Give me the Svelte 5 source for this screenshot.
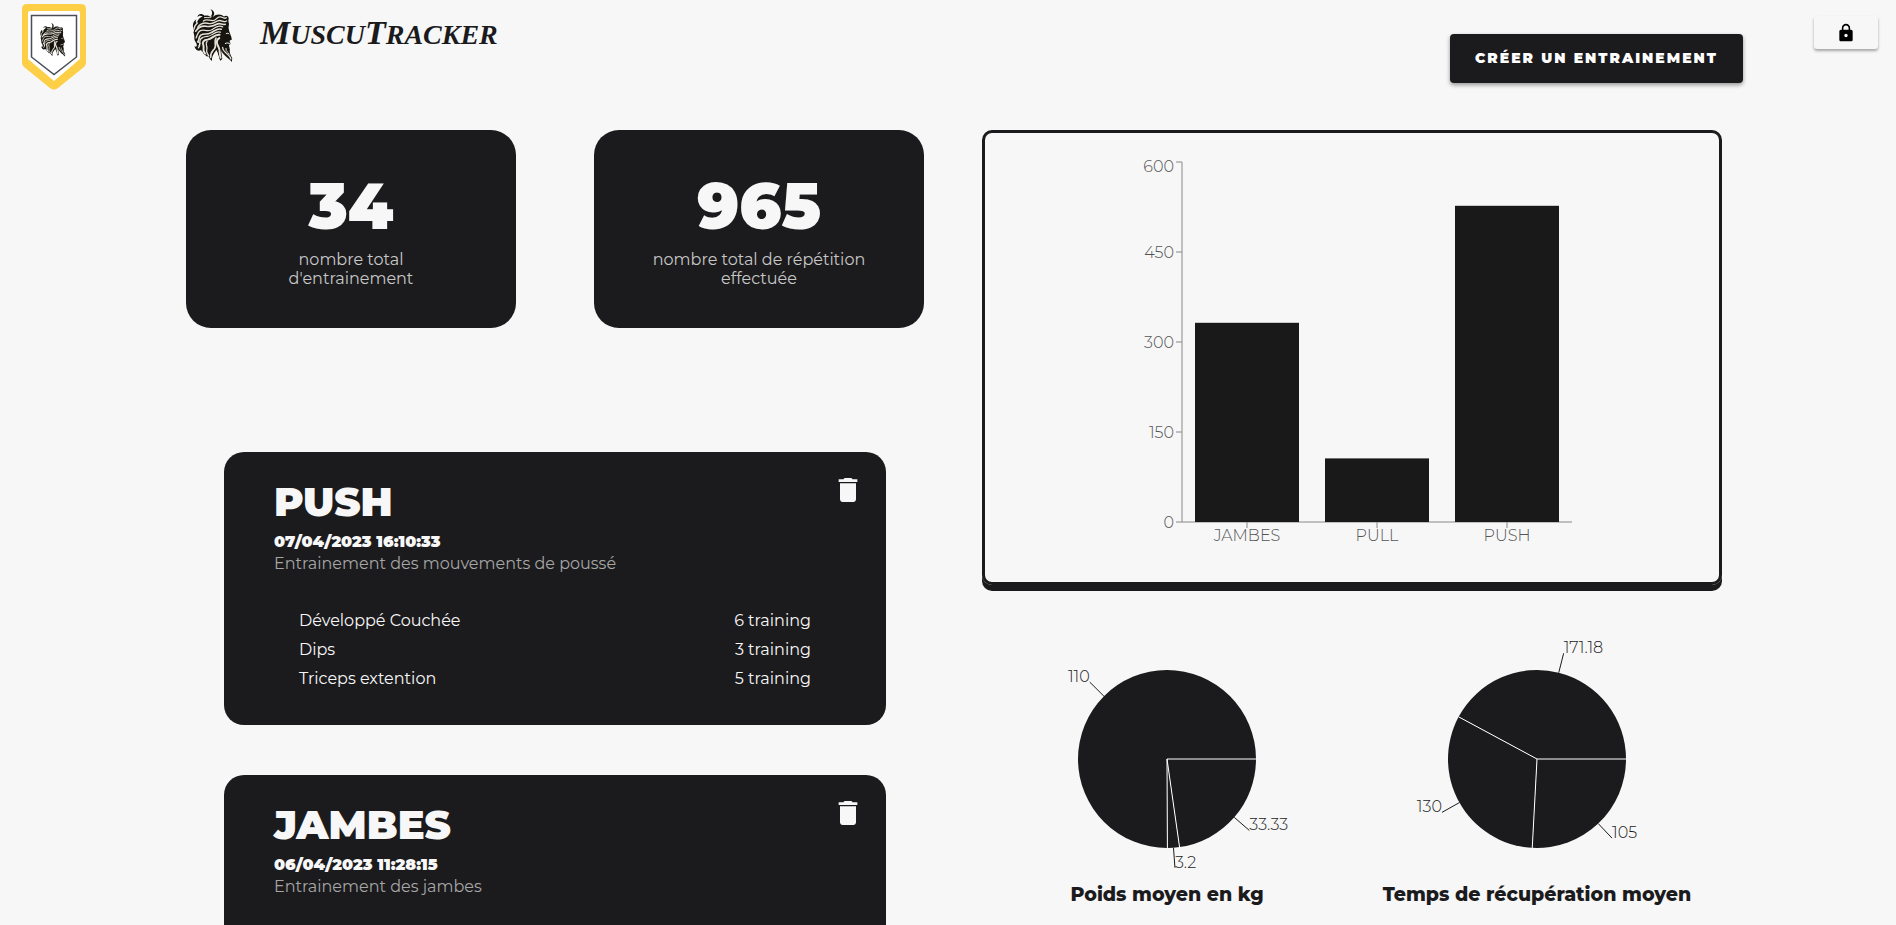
<script>
  const ink = '#1b1b1d';

  const stats = [
    { value: 34, lines: ['nombre total', "d'entrainement"] },
    { value: 965, lines: ['nombre total de répétition', 'effectuée'] }
  ];

  const sessions = [
    {
      name: 'PUSH',
      date: '07/04/2023 16:10:33',
      description: 'Entrainement des mouvements de poussé',
      exercises: [
        ['Développé Couchée', '6 training'],
        ['Dips', '3 training'],
        ['Triceps extention', '5 training']
      ]
    },
    {
      name: 'JAMBES',
      date: '06/04/2023 11:28:15',
      description: 'Entrainement des jambes',
      exercises: []
    }
  ];

  const axis = { left: 80, right: 470, top: 5, bottom: 365, max: 600 };
  const ticks = [0, 150, 300, 450, 600];
  const totals = [
    { label: 'JAMBES', value: 332 },
    { label: 'PULL', value: 106 },
    { label: 'PUSH', value: 527 }
  ];
  const band = (axis.right - axis.left) / totals.length;
  const scaleY = (v) => axis.bottom - (v / axis.max) * (axis.bottom - axis.top);

  const radius = 89;
  const centre = { x: 150, y: 125 };

  function point(angle, r) {
    const a = (angle * Math.PI) / 180;
    return { x: centre.x + Math.cos(a) * r, y: centre.y + Math.sin(a) * r };
  }

  function slices(values) {
    const total = values.reduce((sum, v) => sum + v, 0);
    let start = 0;
    return values.map((value) => {
      const sweep = (value / total) * 360;
      const from = point(start, radius);
      const to = point(start + sweep, radius);
      const middle = start + sweep / 2;
      const slice = {
        value,
        path: `M${centre.x} ${centre.y}L${from.x} ${from.y}A${radius} ${radius} 0 ${sweep > 180 ? 1 : 0} 1 ${to.x} ${to.y}Z`,
        edge: from,
        near: point(middle, radius),
        far: point(middle, radius + 20)
      };
      start += sweep;
      return slice;
    });
  }

  const pies = [
    { title: 'Poids moyen en kg', slices: slices([33.33, 3.2, 110]) },
    { title: 'Temps de récupération moyen', slices: slices([105, 130, 171.18]) }
  ];
</script>

{#snippet head()}
  <path fill="#15140f" d="M54 24C60 18 62 9 54 0C68 6 68 17 61 24C73 13 88 15 95 23C103 17 111 22 109 32C107 38 111 41 110 47L109 57C110 69 118 81 119 92L112 96L115 106L110 109L113 122C111 132 116 140 120 148L119 160C112 151 104 146 98 140C92 134 87 129 86 122L90 150L85 156C77 147 79 133 72 124C67 133 58 140 59 157C52 152 52 146 46 140L45 145C36 137 28 132 26 124C15 130 8 122 6 112C13 118 16 108 9 99C3 91 8 82 3 72L5 64C-2 52 1 38 12 31C9 36 9 41 13 42C19 29 24 25 31 23C24 18 18 20 15 25C17 14 27 12 37 20C45 19 49 20 54 24Z" />
  <g fill="none" stroke="#e4e1d6" stroke-width="4" stroke-linecap="round">
    <path d="M102 26C97 33 91 22 82 24C71 26 72 35 61 35C50 35 42 29 33 36" />
    <path d="M103 36C97 43 88 33 79 35C68 38 63 46 51 44C37 40 24 43 16 55" />
    <path d="M99 46C89 50 84 40 73 46C62 53 52 54 41 52C25 50 16 57 10 67" stroke-width="5" />
    <path d="M91 54C81 48 71 54 60 62C46 70 35 60 24 65C15 69 15 80 11 87" />
    <path d="M87 61C76 57 67 66 55 72C43 79 34 72 25 79C17 86 22 93 16 99" stroke-width="5" />
    <path d="M84 70C71 64 64 78 51 82C37 85 29 83 24 92C19 101 27 107 18 117" />
    <path d="M82 78C66 75 60 91 46 92C34 93 28 100 33 110C36 120 29 122 37 133" stroke-width="6" />
    <path d="M81 88C70 94 73 106 79 115C84 125 81 135 85 147" stroke-width="6" />
    <path d="M71 88C63 98 74 109 67 119C60 128 54 131 55 146" stroke-width="5" />
    <path d="M44 98C36 106 48 114 43 124C41 131 46 134 49 141" />
    <path d="M91 116C91 128 101 130 106 137C111 142 114 144 116 151" />
    <path d="M101 119C99 130 110 129 111 137" stroke-width="3" />
    <path d="M5 60C5 51 9 47 15 42" />
    <path d="M57 24C50 29 43 24 36 26" stroke-width="3" />
  </g>
  <g fill="#15140f">
    <path d="M52 99C58 103 61 113 57 124C48 119 47 108 52 99Z" />
    <path d="M31 86C42 88 52 83 60 78C52 91 40 91 31 86Z" />
    <path d="M34 56C43 61 54 59 64 52C58 65 43 68 34 56Z" />
  </g>
  <g fill="none" stroke="#f7f7f7" stroke-width="3">
    <path d="M101 75C105 72 108 73 111 76" />
    <path d="M98 105C104 100 110 104 113 104" />
    <path d="M67 140L73 131L79 148" />
    <path d="M15 98L23 104L19 111" />
    <path d="M29 133C31 124 38 129 41 138" />
  </g>
{/snippet}

<div class="page">
  <header>
    <svg class="badge" viewBox="0 0 64 86" role="img" aria-label="Profil">
      <path fill="#fccf47" d="M5 0H59Q64 0 64 5V59Q64 61 62 63L36 84Q32 87 28 84L2 63Q0 61 0 59V5Q0 0 5 0Z" />
      <path fill="#fff" d="M8 7H56Q58 7 58 9V55L32 77L6 55V9Q6 7 8 7Z" />
      <path fill="#fff" stroke="#4b4e59" stroke-width="1.5" d="M9.500 11.500H54.500V53L32 70.500L9.500 53Z" />
      <g transform="translate(18 19) scale(.21 .21)">{@render head()}</g>
    </svg>
    <a class="brand" href="#top">
      <svg viewBox="0 0 121 160" aria-hidden="true">{@render head()}</svg>
      <span class="name"><span class="initial">M</span>uscu<span class="initial">T</span>racker</span>
    </a>
    <button class="create" type="button">CRÉER UN ENTRAINEMENT</button>
    <button class="lock" type="button" aria-label="Se déconnecter">
      <svg viewBox="0 0 24 24" aria-hidden="true">
        <path d="M18 8h-1V6c0-2.760-2.240-5-5-5S7 3.240 7 6v2H6c-1.100 0-2 .9-2 2v10c0 1.100.9 2 2 2h12c1.100 0 2-.9 2-2V10c0-1.100-.9-2-2-2zm-6 9c-1.100 0-2-.9-2-2s.9-2 2-2 2 .9 2 2-.9 2-2 2zm3.100-9H8.900V6c0-1.710 1.390-3.100 3.100-3.100s3.100 1.390 3.100 3.100v2z" />
      </svg>
    </button>
  </header>

  <main>
    <section>
      <div class="stats">
        {#each stats as stat}
          <article class="stat">
            <strong>{stat.value}</strong>
            <p>{stat.lines[0]}<br />{stat.lines[1]}</p>
          </article>
        {/each}
      </div>

      <div class="sessions">
        {#each sessions as session}
          <article class="session">
            <div class="top">
              <h2>{session.name}</h2>
              <button class="trash" type="button" aria-label="Supprimer {session.name}">
                <svg viewBox="0 0 24 24" aria-hidden="true">
                  <path d="M6 19c0 1.100.9 2 2 2h8c1.100 0 2-.9 2-2V7H6v12zM19 4h-3.500l-1-1h-5l-1 1H5v2h14V4z" />
                </svg>
              </button>
            </div>
            <time>{session.date}</time>
            <p>{session.description}</p>
            {#if session.exercises.length}
              <table>
                <tbody>
                  {#each session.exercises as [name, count]}
                    <tr><td>{name}</td><td>{count}</td></tr>
                  {/each}
                </tbody>
              </table>
            {/if}
          </article>
        {/each}
      </div>
    </section>

    <section>
      <div class="chart">
        <svg width="500" height="400" viewBox="0 0 500 400" role="img" aria-label="Répétitions par entrainement">
          <g class="axis">
            <line x1={axis.left} x2={axis.left} y1={axis.top} y2={axis.bottom} />
            <line x1={axis.left} x2={axis.right} y1={axis.bottom} y2={axis.bottom} />
            {#each ticks as tick}
              <line x1={axis.left - 6} x2={axis.left} y1={scaleY(tick)} y2={scaleY(tick)} />
              <text x={axis.left - 8} y={tick === axis.max ? 15 : scaleY(tick) + 6} text-anchor="end">{tick}</text>
            {/each}
            {#each totals as total, i}
              <line x1={axis.left + band * (i + 0.5)} x2={axis.left + band * (i + 0.5)} y1={axis.bottom} y2={axis.bottom + 6} />
              <text x={axis.left + band * (i + 0.5)} y={axis.bottom + 19} text-anchor="middle">{total.label}</text>
            {/each}
          </g>
          {#each totals as total, i}
            <rect x={axis.left + band * (i + 0.1)} y={scaleY(total.value)} width={band * 0.8} height={axis.bottom - scaleY(total.value)} fill="#191919" />
          {/each}
        </svg>
      </div>

      <div class="pies">
        {#each pies as pie}
          <figure>
            <svg width="300" height="250" viewBox="0 0 300 250" role="img" aria-label={pie.title}>
              {#each pie.slices as slice}
                <path d={slice.path} fill={ink} />
              {/each}
              {#each pie.slices as slice}
                <line x1={centre.x} y1={centre.y} x2={slice.edge.x} y2={slice.edge.y} stroke="#fff" />
                <line x1={slice.near.x} y1={slice.near.y} x2={slice.far.x} y2={slice.far.y} stroke={ink} />
                <text class="amount" x={slice.far.x} y={slice.far.y} text-anchor={slice.far.x < centre.x ? 'end' : 'start'}>{slice.value}</text>
              {/each}
            </svg>
            <figcaption>{pie.title}</figcaption>
          </figure>
        {/each}
      </div>
    </section>
  </main>
</div>

<style>
  :global(html) {
    scrollbar-width: none;
  }
  :global(body) {
    margin: 0;
    background: #f7f7f7;
  }
  .page {
    color: #1b1b1d;
    font-family: Montserrat, Inter, sans-serif;
    font-size: 16px;
    line-height: 19px;
    padding-bottom: 50px;
  }
  header {
    display: flex;
    align-items: flex-start;
    box-sizing: border-box;
    height: 130px;
    padding: 4px 18px 0 22px;
  }
  .badge {
    width: 64px;
    height: 86px;
    flex: none;
  }
  .brand {
    display: flex;
    align-items: flex-start;
    margin: 5px auto 0 106px;
    color: inherit;
    text-decoration: none;
  }
  .brand svg {
    width: 41px;
    height: 53px;
  }
  .name {
    margin-left: 27px;
    font: italic 700 28px/52px "Liberation Serif", serif;
    text-transform: uppercase;
  }
  .initial {
    font-size: 34px;
    line-height: 1;
  }
  button {
    border: 0;
    padding: 0;
    font: inherit;
    cursor: pointer;
  }
  .create {
    height: 49px;
    margin: 30px 71px 0 0;
    padding: 0 25px;
    border-radius: 4px;
    background: #1b1b1d;
    color: #fff;
    font-size: 14px;
    font-weight: 900;
    letter-spacing: 2px;
    box-shadow: 0 2px 4px #0006;
  }
  .lock {
    display: grid;
    place-items: center;
    width: 64px;
    height: 33px;
    margin-top: 12px;
    border-radius: 3px;
    background: #f7f7f7;
    box-shadow: 0 2px 3px #0005;
  }
  .lock svg {
    width: 20px;
    height: 20px;
  }
  main {
    display: grid;
    grid-template-columns: 738fr 740fr;
    gap: 58px;
    padding: 0 174px 0 186px;
  }
  .stats {
    display: grid;
    grid-template-columns: 1fr 1fr;
    gap: 78px;
  }
  .stat {
    box-sizing: border-box;
    height: 198px;
    padding-top: 36px;
    border-radius: 25px;
    background: #1b1b1d;
    color: #c8c8c8;
    text-align: center;
  }
  .stat strong {
    display: block;
    color: #f7f7f7;
    font-size: 64px;
    font-weight: 900;
    line-height: 80px;
  }
  .stat p {
    margin: 4px 0 0;
  }
  .sessions {
    display: grid;
    gap: 50px;
    padding: 124px 38px 0;
  }
  .session {
    box-sizing: border-box;
    min-height: 273px;
    padding: 25px 50px;
    border-radius: 20px;
    background: #1b1b1d;
    color: #f7f7f7;
  }
  .top {
    display: flex;
    justify-content: space-between;
  }
  h2 {
    margin: 0;
    font-size: 40px;
    font-weight: 900;
    line-height: 50px;
  }
  .trash {
    width: 32px;
    height: 32px;
    margin-right: -28px;
    margin-top: -3px;
    background: none;
  }
  .trash svg {
    display: block;
    fill: #f7f7f7;
  }
  time {
    display: block;
    margin-top: 4px;
    font-weight: 900;
    line-height: 22px;
  }
  .session p {
    margin: 0;
    color: #a6a6a6;
    line-height: 22px;
  }
  table {
    width: 100%;
    margin-top: 31px;
    padding: 0 25px;
    border-spacing: 0;
  }
  td {
    padding: 0;
    line-height: 29px;
  }
  td:last-child {
    text-align: right;
  }
  .chart {
    display: flex;
    justify-content: center;
    padding: 24px 0 25px;
    border: 3px solid #1b1b1d;
    border-radius: 10px;
    box-shadow: 0 6px 0 #1b1b1d;
  }
  .chart svg {
    display: block;
  }
  .axis line {
    stroke: #888;
  }
  .axis text {
    fill: #555;
    font-weight: 300;
  }
  .amount {
    fill: #1b1b1d;
    font-weight: 300;
  }
  .pies {
    display: grid;
    grid-template-columns: 1fr 1fr;
    margin-top: 49px;
  }
  figure {
    display: flex;
    flex-direction: column;
    align-items: center;
    margin: 0;
  }
  figcaption {
    font-size: 19px;
    font-weight: 800;
    line-height: 22px;
  }
</style>
